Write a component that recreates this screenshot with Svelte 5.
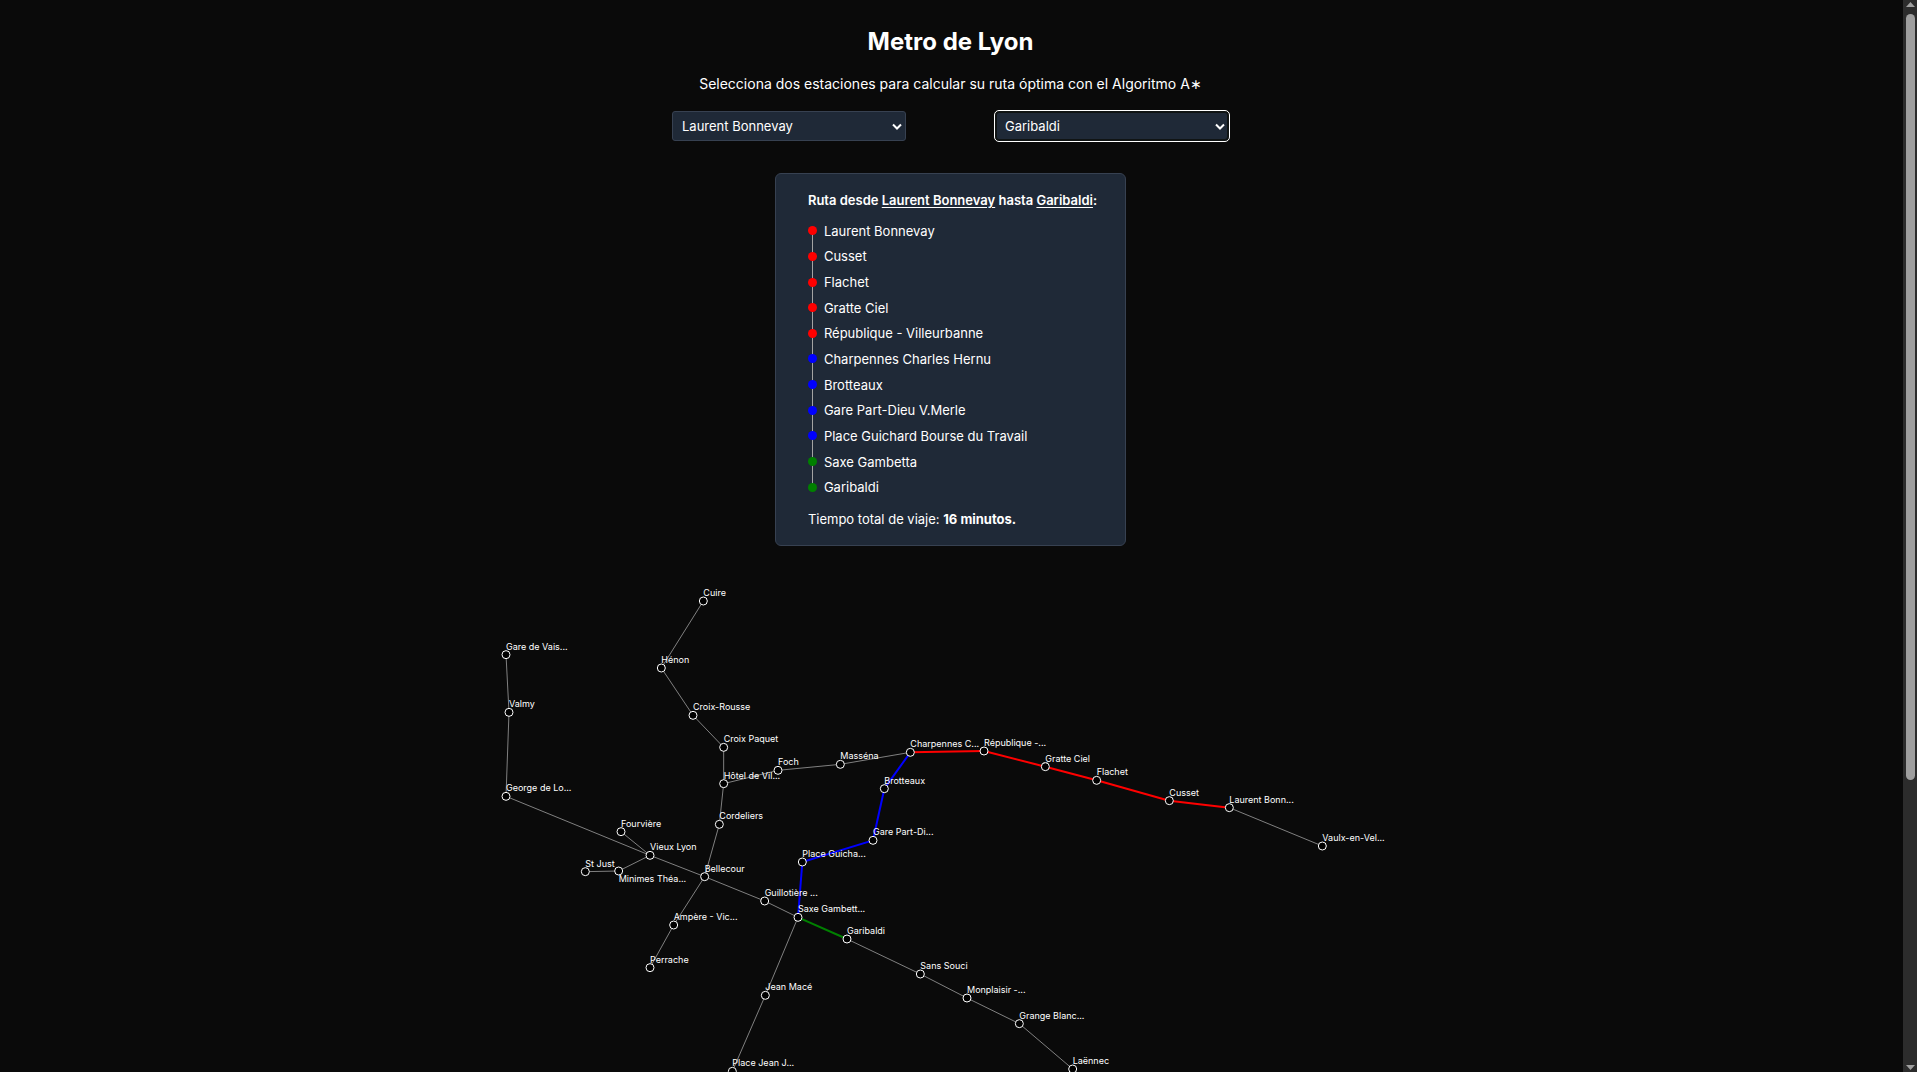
<script>
  const COLORS = { A: 'red', B: 'blue', D: 'green' };

  const route = [
    ['Laurent Bonnevay', 'A'],
    ['Cusset', 'A'],
    ['Flachet', 'A'],
    ['Gratte Ciel', 'A'],
    ['République - Villeurbanne', 'A'],
    ['Charpennes Charles Hernu', 'B'],
    ['Brotteaux', 'B'],
    ['Gare Part-Dieu V.Merle', 'B'],
    ['Place Guichard Bourse du Travail', 'B'],
    ['Saxe Gambetta', 'D'],
    ['Garibaldi', 'D']
  ];

  // Station positions are stored on a grid of three units per pixel.
  const UNIT = 3;
  const LABEL_LENGTH = 12;

  const stations = {
    cuire: { name: 'Cuire', x: 670, y: 93 },
    henon: { name: 'Hénon', x: 544, y: 294 },
    rousse: { name: 'Croix-Rousse', x: 639, y: 436 },
    paquet: { name: 'Croix Paquet', x: 731, y: 532 },
    hotel: { name: 'Hôtel de Ville', x: 731, y: 641 },
    foch: { name: 'Foch', x: 894, y: 601 },
    massena: { name: 'Masséna', x: 1081, y: 583 },
    charpennes: { name: 'Charpennes Charles Hernu', x: 1291, y: 547 },
    republique: { name: 'République - Villeurbanne', x: 1512, y: 543 },
    gratte: { name: 'Gratte Ciel', x: 1696, y: 590 },
    flachet: { name: 'Flachet', x: 1850, y: 631 },
    cusset: { name: 'Cusset', x: 2068, y: 692 },
    laurent: { name: 'Laurent Bonnevay', x: 2248, y: 713 },
    vaulx: { name: 'Vaulx-en-Velin', x: 2527, y: 828 },
    vaise: { name: 'Gare de Vaise', x: 78, y: 254 },
    valmy: { name: 'Valmy', x: 87, y: 427 },
    george: { name: 'George de Loup', x: 78, y: 679 },
    fourviere: { name: 'Fourvière', x: 423, y: 785 },
    vieux: { name: 'Vieux Lyon', x: 510, y: 856 },
    just: { name: 'St Just', x: 316, y: 905 },
    minimes: { name: 'Minimes Théâtres', label: 'Minimes Théa...', x: 416, y: 903, below: true },
    cordeliers: { name: 'Cordeliers', x: 718, y: 763 },
    bellecour: { name: 'Bellecour', x: 674, y: 920 },
    ampere: { name: 'Ampère - Victor Hugo', x: 581, y: 1065 },
    perrache: { name: 'Perrache', x: 510, y: 1193 },
    guillotiere: { name: 'Guillotière Gabriel Péri', x: 854, y: 993 },
    saxe: { name: 'Saxe Gambetta', x: 954, y: 1042 },
    guichard: { name: 'Place Guichard', x: 967, y: 876 },
    partdieu: { name: 'Gare Part-Dieu', x: 1179, y: 811 },
    brotteaux: { name: 'Brotteaux', x: 1213, y: 656 },
    garibaldi: { name: 'Garibaldi', x: 1101, y: 1107 },
    sans: { name: 'Sans Souci', x: 1321, y: 1212 },
    monplaisir: { name: 'Monplaisir - Lumière', x: 1461, y: 1284 },
    grange: { name: 'Grange Blanche', x: 1618, y: 1361 },
    laennec: { name: 'Laënnec', x: 1778, y: 1497 },
    mace: { name: 'Jean Macé', x: 856, y: 1276 },
    jaures: { name: 'Place Jean Jaurès', x: 757, y: 1504 }
  };

  const links = [
    ['cuire', 'henon'], ['henon', 'rousse'], ['rousse', 'paquet'], ['paquet', 'hotel'],
    ['hotel', 'foch'], ['foch', 'massena'], ['massena', 'charpennes'],
    ['laurent', 'vaulx'], ['vaise', 'valmy'], ['valmy', 'george'], ['george', 'vieux'],
    ['fourviere', 'vieux'], ['vieux', 'minimes'], ['minimes', 'just'],
    ['hotel', 'cordeliers'], ['cordeliers', 'bellecour'], ['vieux', 'bellecour'],
    ['bellecour', 'ampere'], ['ampere', 'perrache'], ['bellecour', 'guillotiere'],
    ['guillotiere', 'saxe'], ['saxe', 'mace'], ['mace', 'jaures'],
    ['garibaldi', 'sans'], ['sans', 'monplaisir'], ['monplaisir', 'grange'], ['grange', 'laennec'],
    ['charpennes', 'republique', 'A'], ['republique', 'gratte', 'A'], ['gratte', 'flachet', 'A'],
    ['flachet', 'cusset', 'A'], ['cusset', 'laurent', 'A'],
    ['charpennes', 'brotteaux', 'B'], ['brotteaux', 'partdieu', 'B'],
    ['partdieu', 'guichard', 'B'], ['guichard', 'saxe', 'B'],
    ['saxe', 'garibaldi', 'D']
  ];

  const names = [...new Set([...Object.values(stations).map((s) => s.name), ...route.map((r) => r[0])])].sort();

  let origin = $state('Laurent Bonnevay');
  let target = $state('Garibaldi');

  const labelOf = (s) =>
    s.label ?? (s.name.length > LABEL_LENGTH ? s.name.slice(0, LABEL_LENGTH) + '...' : s.name);
</script>

<div class="window">
  <main>
    <h1>Metro de Lyon</h1>
    <p class="intro">Selecciona dos estaciones para calcular su ruta óptima con el Algoritmo A∗</p>

    <form class="pickers">
      <div class="picker">
        <select aria-label="Estación de origen" bind:value={origin}>
          {#each names as name}<option>{name}</option>{/each}
        </select>
        <svg class="chevron" viewBox="0 0 10 8" aria-hidden="true"><path d="M1 1.5 5 5.5 9 1.5" /></svg>
      </div>
      <div class="picker active">
        <select aria-label="Estación de destino" bind:value={target}>
          {#each names as name}<option>{name}</option>{/each}
        </select>
        <svg class="chevron" viewBox="0 0 10 8" aria-hidden="true"><path d="M1 1.5 5 5.5 9 1.5" /></svg>
      </div>
    </form>

    <section class="card">
      <h2>Ruta desde <u>{origin}</u> hasta <u>{target}</u>:</h2>
      <ol>
        {#each route as [name, line]}
          <li class={'line-' + line}>{name}</li>
        {/each}
      </ol>
      <p>Tiempo total de viaje: <strong>16 minutos.</strong></p>
    </section>

    <svg class="map" width="941" height="700" role="img" aria-label="Mapa del metro">
      {#each links as [from, to, line]}
        <line
          class:route={line}
          stroke={line ? COLORS[line] : '#808080'}
          x1={stations[from].x / UNIT}
          y1={stations[from].y / UNIT}
          x2={stations[to].x / UNIT}
          y2={stations[to].y / UNIT}
        />
      {/each}
      {#each Object.values(stations) as s}
        <circle cx={s.x / UNIT} cy={s.y / UNIT} r="4" />
        <text x={s.x / UNIT} y={s.y / UNIT + (s.below ? 11 : -5)}>{labelOf(s)}</text>
      {/each}
    </svg>
  </main>

  <div class="scrollbar" aria-hidden="true">
    <svg viewBox="0 0 9 5"><path d="M0 5 4.5 0 9 5Z" /></svg>
    <div class="track"><div class="thumb"></div></div>
    <svg viewBox="0 0 9 5"><path d="M0 0 4.5 5 9 0Z" /></svg>
  </div>
</div>

<style>
  :global(body) {
    background: #0a0a0a;
    overflow: hidden;
  }
  .window {
    display: flex;
    gap: 2px;
    height: 100vh;
    overflow: hidden;
    background: #0a0a0a;
    color: #fff;
    font: 13px/20px Inter, 'Liberation Sans', sans-serif;
  }
  main {
    flex: 1;
    min-width: 0;
    display: flex;
    flex-direction: column;
    align-items: center;
    padding-top: 26px;
  }
  h1, h2, p, ol {
    margin: 0;
    padding: 0;
  }
  h1 {
    font-size: 24px;
    line-height: 32px;
    font-weight: 700;
  }
  .intro {
    margin-top: 14px;
    font-size: 14px;
    line-height: 24px;
  }
  .pickers {
    display: flex;
    gap: 89px;
    margin-top: 15px;
  }
  .picker {
    position: relative;
    width: 234px;
  }
  select {
    appearance: none;
    display: block;
    width: 100%;
    height: 30px;
    padding: 0 9px;
    border: 1px solid #374151;
    border-radius: 3px;
    background: #1f2937;
    color: #fff;
    font: inherit;
  }
  .active select {
    padding: 0 8px;
    border: 2px solid #101414;
    border-radius: 4px;
    outline: 1px solid #fff;
  }
  .chevron {
    position: absolute;
    right: 4px;
    top: 12px;
    width: 10px;
    height: 8px;
    fill: none;
    stroke: #fff;
    stroke-width: 2;
    pointer-events: none;
  }
  .card {
    box-sizing: border-box;
    margin-top: 32px;
    padding: 16px 28px 16px 32px;
    border: 1px solid #374151;
    border-radius: 6px;
    background: #1f2937;
  }
  h2 {
    font-size: 13px;
    line-height: 20px;
    font-weight: 600;
  }
  u {
    text-underline-offset: 2px;
  }
  ol {
    display: grid;
    grid-auto-rows: 1fr;
    height: 282px;
    margin: 8px 0 9px;
    list-style: none;
  }
  li {
    position: relative;
    display: flex;
    align-items: center;
    gap: 7px;
  }
  li::before {
    content: '';
    z-index: 1;
    width: 9px;
    height: 9px;
    border-radius: 50%;
    background: currentColor;
  }
  li:not(:last-child)::after {
    content: '';
    position: absolute;
    left: 4px;
    top: 50%;
    width: 1px;
    height: 100%;
    background: #a3a3a3;
  }
  .line-A::before { background: red; }
  .line-B::before { background: blue; }
  .line-D::before { background: green; }
  .map {
    flex: none;
    margin-top: 24px;
    overflow: visible;
  }
  line { stroke-width: 1; }
  .route { stroke-width: 2; }
  circle {
    fill: #000;
    stroke: #fff;
    stroke-width: 1;
  }
  text {
    fill: #fff;
    font-size: 9px;
  }
  .scrollbar {
    display: flex;
    flex-direction: column;
    align-items: center;
    box-sizing: border-box;
    width: 14px;
    padding: 2px 0;
    background: #2c2c2c;
  }
  .scrollbar svg {
    width: 9px;
    height: 5px;
    fill: #9f9f9f;
  }
  .track {
    flex: 1;
    display: flex;
    flex-direction: column;
    width: 9px;
    padding: 7px 0;
  }
  .track::after {
    content: '';
    flex: 4;
  }
  .thumb {
    flex: 11;
    border-radius: 5px;
    background: #9f9f9f;
  }
</style>
